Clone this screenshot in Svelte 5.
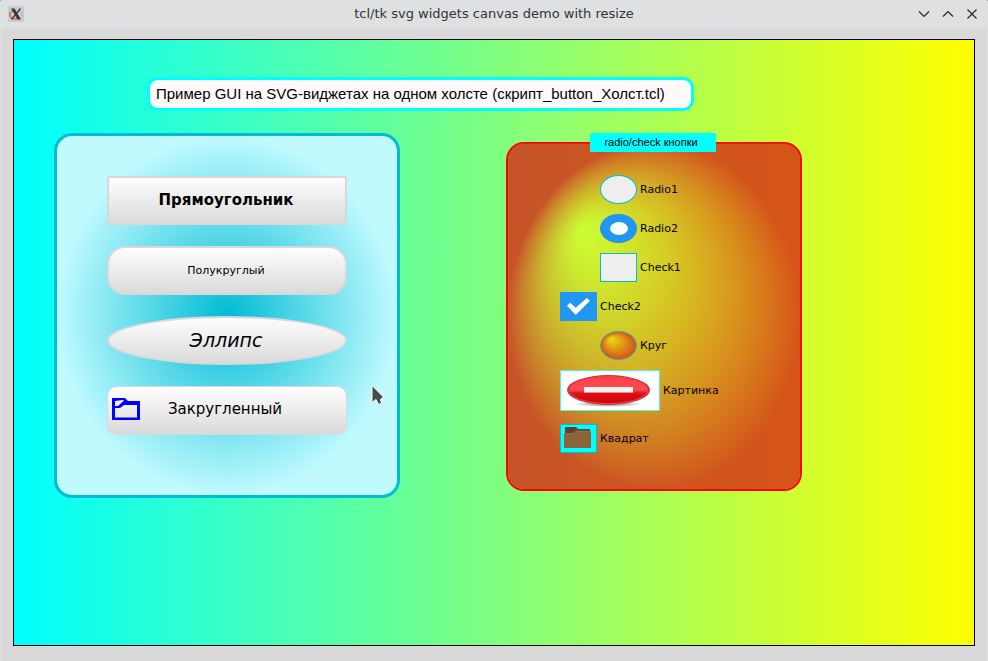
<script>
  let selectedRadio = $state('radio2');
  let check1 = $state(false);
  let check2 = $state(true);
  let caption = $state('Пример GUI на SVG-виджетах на одном холсте (скрипт_button_Холст.tcl)');
</script>

<div class="window">
  <header class="titlebar">
    <svg class="app-icon" viewBox="0 0 16 16" aria-hidden="true">
      <rect width="16" height="16" rx="1" fill="#c3ced2" />
      <path d="M4 5C1 7 1 11 5 12.500C7 13.300 9 13.200 10.500 12.500" fill="none" stroke="#f26a35" stroke-width="1.500" />
      <path d="M10 5.500C15 5 16 9 12.500 11.800" fill="none" stroke="#e8b189" stroke-width="1.200" />
      <path d="M3 2.500H6.500L13 13.500H9.500Z" fill="#33383b" />
      <path d="M12.500 2.500L3.500 13.500" stroke="#33383b" stroke-width="1.200" />
    </svg>
    <h1>tcl/tk svg widgets canvas demo with resize</h1>
    <div class="window-buttons">
      <button aria-label="Minimize"><svg viewBox="0 0 12 12"><path d="M1 3.500L6 8.500L11 3.500" /></svg></button>
      <button aria-label="Maximize"><svg viewBox="0 0 12 12"><path d="M1 8.500L6 3.500L11 8.500" /></svg></button>
      <button aria-label="Close"><svg viewBox="0 0 12 12"><path d="M1.500 1.500L10.500 10.500M10.500 1.500L1.500 10.500" /></svg></button>
    </div>
  </header>

  <main class="canvas">
    <div class="caption-row">
      <input class="caption" type="text" aria-label="Заголовок" bind:value={caption} />
    </div>

    <div class="panels">
      <section class="panel-blue" aria-label="Кнопки">
        <button class="shape rect">Прямоугольник</button>
        <button class="shape half-round">Полукруглый</button>
        <button class="shape ellipse">Эллипс</button>
        <button class="shape rounded">
          <svg class="folder" viewBox="0 0 28 24" aria-hidden="true">
            <path fill-rule="evenodd" fill="#0000ff" d="M0 1H13L16 4H28V23H0ZM3 4V9H6L12 3.500L11 3ZM3 11V20.500H25V8H12L8 11Z" />
          </svg>
          <span>Закругленный</span>
        </button>
        <svg class="pointer" viewBox="0 0 14 22" aria-hidden="true">
          <path d="M1 1.500V18.500L5 15.500L7.500 20.500L10.500 19L9.500 15.500L12.500 13Z" fill="#4a4a4a" stroke="#fff" />
        </svg>
      </section>

      <fieldset class="panel-red">
        <legend>radio/check кнопки</legend>
        <svg class="backdrop" viewBox="0 0 100 100" preserveAspectRatio="none" aria-hidden="true">
          <defs>
            <radialGradient id="glow" cx="50%" cy="50%" r="50%" fx="25%" fy="25%">
              <stop offset="0" stop-color="#ffff00" stop-opacity="0.5" />
              <stop offset="1" stop-color="#d72a14" stop-opacity="0.8" />
            </radialGradient>
          </defs>
          <rect width="100" height="100" fill="url(#glow)" />
        </svg>

        <div class="choices">
          <label class="choice indented">
            <input class="mark radio" type="radio" name="radio" value="radio1" bind:group={selectedRadio} />
            Radio1
          </label>
          <label class="choice indented">
            <input class="mark radio" type="radio" name="radio" value="radio2" bind:group={selectedRadio} />
            Radio2
          </label>
          <label class="choice indented">
            <input class="mark check" type="checkbox" bind:checked={check1} />
            Check1
          </label>
          <label class="choice">
            <input class="mark check" type="checkbox" bind:checked={check2} />
            Check2
          </label>
          <button class="choice indented">
            <svg class="mark-icon" viewBox="0 0 37 29" aria-hidden="true">
              <defs>
                <radialGradient id="ball" cx="50%" cy="50%" r="50%" fx="28%" fy="25%">
                  <stop offset="0" stop-color="#e8e010" />
                  <stop offset="0.500" stop-color="#e09a14" />
                  <stop offset="1" stop-color="#d2501b" />
                </radialGradient>
              </defs>
              <ellipse cx="18.500" cy="14.500" rx="18" ry="14" fill="url(#ball)" stroke="#3fa9a5" />
            </svg>
            Круг
          </button>
          <button class="choice">
            <svg class="picture" viewBox="0 0 100 41" aria-hidden="true">
              <defs>
                <linearGradient id="gloss" x2="0" y2="1">
                  <stop offset="0" stop-color="#ff4048" />
                  <stop offset="0.500" stop-color="#f94c52" />
                  <stop offset="0.620" stop-color="#dc1017" />
                  <stop offset="1" stop-color="#d10008" />
                </linearGradient>
                <radialGradient id="shade">
                  <stop offset="0" stop-color="#777" />
                  <stop offset="1" stop-color="#fff" />
                </radialGradient>
              </defs>
              <rect x="0.500" y="0.500" width="99" height="40" fill="#fff" stroke="#40ffe6" />
              <ellipse cx="48" cy="34" rx="35" ry="3" fill="url(#shade)" />
              <ellipse cx="48.500" cy="20" rx="41.500" ry="15" fill="#c9303a" />
              <ellipse cx="48.500" cy="20" rx="39.500" ry="13.500" fill="url(#gloss)" stroke="#e8454c" />
              <rect x="24" y="17" width="49" height="5.500" fill="#f4f1f1" />
            </svg>
            Картинка
          </button>
          <button class="choice last">
            <svg class="mark-icon" viewBox="0 0 37 29" aria-hidden="true">
              <rect x="0.500" y="0.500" width="36" height="28" fill="#00ffff" stroke="#00bcd4" />
              <path d="M5 3H16L18 5H30V12H5Z" fill="#5c4330" />
              <path d="M4 9.500H13L16 7H31V24H4Z" fill="#8c6239" />
              <path d="M4 9.500H13L16 7H31" fill="none" stroke="#a98259" stroke-width="0.600" />
            </svg>
            Квадрат
          </button>
        </div>
      </fieldset>
    </div>
  </main>
</div>

<style>
  :global(body) {
    margin: 0;
    background: #8b8d8f;
  }

  .window {
    box-sizing: border-box;
    min-height: 100vh;
    display: flex;
    flex-direction: column;
    border-radius: 3px 3px 0 0;
    background: #d9d9d9;
    box-shadow: inset 2px 0 #dedfe1, inset -2px 0 #dedfe1;
    font-family: "DejaVu Sans", sans-serif;
  }

  button {
    margin: 0;
    padding: 0;
    border: 0;
    background: none;
    color: #000;
    font-family: inherit;
  }

  .titlebar {
    display: grid;
    grid-template-columns: 60px 1fr 60px;
    align-items: center;
    height: 28px;
    padding: 0 8px;
    border-radius: 3px 3px 0 0;
    background: #dee0e2;
  }

  .app-icon {
    width: 16px;
    height: 16px;
  }

  h1 {
    margin: 0;
    padding-bottom: 1px;
    text-align: center;
    font-size: 13px;
    font-weight: 400;
    color: #2f3437;
  }

  .window-buttons {
    display: flex;
    justify-content: flex-end;
    gap: 12px;
    padding-right: 2px;
  }

  .window-buttons button {
    display: flex;
  }

  .window-buttons svg {
    width: 12px;
    height: 12px;
    fill: none;
    stroke: #25292c;
    stroke-width: 1.2;
  }

  .canvas {
    flex: 1;
    display: flex;
    flex-direction: column;
    margin: 11px 13px 15px;
    border: 1px solid #000;
    background: linear-gradient(90deg, #00ffff, #ffff00);
  }

  .caption-row {
    display: grid;
    grid-template-columns: 133fr 547fr 280fr;
    padding-top: 37px;
  }

  .caption {
    grid-column: 2;
    box-sizing: border-box;
    min-width: 0;
    height: 34px;
    padding: 0 6px 2px;
    border: 3px solid #00ffff;
    border-radius: 11px;
    background: #fffafa;
    color: #000;
    font: 15px "Liberation Sans", sans-serif;
  }

  .panels {
    display: grid;
    grid-template-columns: 40fr 346fr 106fr 296fr 172fr;
    align-items: start;
    padding-top: 22px;
  }

  .panel-blue {
    grid-column: 2;
    position: relative;
    display: flex;
    flex-direction: column;
    align-items: center;
    gap: 21px;
    padding: 40px 0 60px;
    border: 3px solid #00bcd4;
    border-radius: 18px;
    background: radial-gradient(closest-side, #00bcd4, #c0faff);
  }

  .shape {
    box-sizing: border-box;
    width: 240px;
    height: 49px;
    padding: 0 2px 1px 0;
    border: 2px solid #d8d8da;
    background: linear-gradient(#ffffff, #d9d9d9);
    background-origin: border-box;
    font-size: 15px;
  }

  .rect {
    font-weight: 700;
  }

  .half-round {
    border-radius: 18px;
    font-size: 11px;
  }

  .ellipse {
    border-radius: 50%;
    font-size: 19px;
    font-style: italic;
  }

  .rounded {
    display: grid;
    grid-template-columns: 28px 1fr 28px;
    align-items: center;
    padding: 0 8px 3px 4px;
    border-width: 1px;
    border-radius: 10px;
  }

  .folder {
    width: 28px;
    height: 24px;
  }

  .pointer {
    position: absolute;
    top: 248px;
    right: 12px;
    width: 14px;
    height: 22px;
  }

  .panel-red {
    grid-column: 4;
    position: relative;
    box-sizing: border-box;
    min-width: 0;
    margin: 0;
    padding: 23px 0 36px 52px;
    border: 2px solid #ff0000;
    border-radius: 18px;
  }

  .panel-red legend {
    position: relative;
    z-index: 1;
    display: grid;
    justify-content: center;
    box-sizing: border-box;
    width: 126px;
    height: 19px;
    margin-left: 30px;
    padding: 0 4px 0 0;
    background: #00ffff;
    font: 11px/18px "Liberation Sans Narrow", "Liberation Sans", sans-serif;
  }

  .backdrop {
    position: absolute;
    left: 0;
    bottom: 0;
    width: 100%;
    height: 346px;
    border-radius: 16px;
  }

  .choices {
    position: relative;
    display: flex;
    flex-direction: column;
    align-items: flex-start;
    gap: 10px;
  }

  .choice {
    display: flex;
    align-items: center;
    gap: 3px;
    font-size: 11px;
    line-height: 13px;
  }

  .indented {
    margin-left: 40px;
  }

  .last {
    margin-top: 3px;
  }

  .mark,
  .mark-icon {
    display: block;
    box-sizing: border-box;
    width: 37px;
    height: 29px;
  }

  .mark {
    display: grid;
    place-items: center;
    appearance: none;
    margin: 0;
    border: 1px solid #00bcd4;
    background: #eeeeee;
  }

  .mark:checked {
    border-color: #2196f3;
    background: #2196f3;
  }

  .radio {
    border-radius: 50%;
  }

  .radio:checked::before {
    content: "";
    width: 18px;
    height: 13px;
    border-radius: 50%;
    background: #fff;
  }

  .check:checked::before {
    content: "";
    width: 23px;
    height: 17px;
    background: #fff;
    clip-path: polygon(0 46%, 14% 28%, 38% 58%, 86% 0, 100% 16%, 38% 100%);
  }

  .picture {
    width: 100px;
    height: 41px;
  }
</style>
